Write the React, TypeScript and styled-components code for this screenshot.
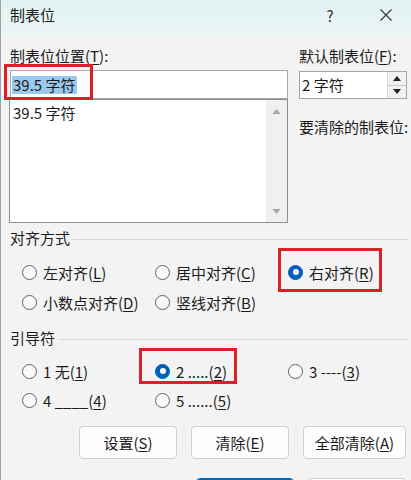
import React from "react";
import styled, { createGlobalStyle } from "styled-components";

const GlobalStyle = createGlobalStyle`
  html, body {
    margin: 0;
    padding: 0;
    background: #f3f3f3;
  }
  body {
    font-family: "Noto Sans CJK SC", "Noto Sans", sans-serif;
    font-size: 15px;
    color: #1b1b1b;
  }
`;

const Window = styled.div`
  width: 411px;
  height: 480px;
  overflow: hidden;
  box-sizing: border-box;
  background: #f3f3f3;
  border-left: 1px solid #a3a3a3;
`;

const TitleBar = styled.div`
  height: 36px;
  box-sizing: border-box;
  padding: 5px 0 0 9px;
  display: flex;
  align-items: flex-start;
  background: linear-gradient(#e2f2f2, #eaf5f4);
`;

const Title = styled.div`
  line-height: 20px;
  font-size: 15px;
`;

const TitleButtons = styled.div`
  margin-left: auto;
  margin-right: 3px;
  display: flex;
  gap: 12px;
`;

const TitleButton = styled.div`
  width: 44px;
  height: 20px;
  display: flex;
  align-items: center;
  justify-content: center;
  font-size: 15px;
  color: #333;
`;

const Body = styled.div`
  padding: 10px 3px 0 9px;
`;

const TopGrid = styled.div`
  display: grid;
  grid-template-columns: 278px 108px;
  column-gap: 11px;
`;

const Column = styled.div`
  display: flex;
  flex-direction: column;
`;

const Label = styled.div<{ $gap?: number }>`
  line-height: 20px;
  height: 20px;
  white-space: nowrap;
  margin-top: ${({ $gap }) => $gap ?? 0}px;
`;

const Key = styled.span`
  text-decoration: underline;
  text-underline-offset: 2px;
  text-decoration-thickness: 1px;
`;

const Callout = styled.span<{ $l: number; $t: number; $w: number; $h: number }>`
  position: absolute;
  left: ${({ $l }) => $l}px;
  top: ${({ $t }) => $t}px;
  width: ${({ $w }) => $w}px;
  height: ${({ $h }) => $h}px;
  box-sizing: border-box;
  border: 3px solid #dc2029;
  pointer-events: none;
`;

const TextBox = styled.div`
  position: relative;
  margin-top: 4px;
  height: 29px;
  box-sizing: border-box;
  border: 1px solid #a9a9a9;
  background: #fff;
  padding-left: 1px;
  display: flex;
  align-items: center;
`;

const Selection = styled.span`
  background: #99c9ef;
  line-height: 18px;
  padding: 0 1px;
`;

const ListBox = styled.div`
  margin-left: -1px;
  height: 124px;
  box-sizing: border-box;
  border: 1px solid #8d8d8d;
  background: #fff;
  display: flex;
`;

const ListItems = styled.div`
  flex: 1;
  padding: 3px 3px;
  line-height: 20px;
`;

const ScrollBar = styled.div`
  width: 21px;
  background: #f0f0f0;
  display: flex;
  flex-direction: column;
  justify-content: space-between;
  align-items: center;
  padding: 9px 0 8px;
`;

const SpinBox = styled.div`
  margin-top: 5px;
  height: 28px;
  box-sizing: border-box;
  border: 1px solid #a5a5a5;
  background: #fff;
  display: flex;
`;

const SpinText = styled.div`
  flex: 1;
  padding-left: 2px;
  line-height: 26px;
`;

const SpinButtons = styled.div`
  width: 18px;
  display: flex;
  flex-direction: column;
  border-left: 1px solid #d4d4d4;
`;

const SpinButton = styled.div<{ $down?: boolean }>`
  flex: 1;
  display: flex;
  align-items: center;
  justify-content: center;
  background: #f1f1f1;
  border-top: ${({ $down }) => ($down ? "1px solid #c9c9c9" : "none")};
`;

const Group = styled.div<{ $gap: number }>`
  margin-top: ${({ $gap }) => $gap}px;
`;

const GroupHeader = styled.div`
  display: flex;
  align-items: center;
  gap: 3px;
  line-height: 20px;
`;

const Rule = styled.div`
  flex: 1;
  height: 1px;
  margin-top: 2px;
  background: #d8d8d8;
`;

const RadioGrid = styled.div<{ $gap: number; $row: number }>`
  margin-top: ${({ $gap }) => $gap}px;
  padding-left: 12px;
  display: grid;
  grid-template-columns: repeat(3, 133px);
  grid-auto-rows: 24px;
  row-gap: ${({ $row }) => $row}px;
`;

const RadioItem = styled.label`
  position: relative;
  display: flex;
  align-items: center;
  gap: 6px;
  white-space: nowrap;
`;

const RadioDot = styled.span<{ $on?: boolean }>`
  position: relative;
  width: 15px;
  height: 15px;
  flex: none;
  box-sizing: border-box;
  border-radius: 50%;
  border: 1px solid ${({ $on }) => ($on ? "#005fb8" : "#616161")};
  background: ${({ $on }) => ($on ? "#005fb8" : "#f9f9f9")};
  &::after {
    content: "";
    display: ${({ $on }) => ($on ? "block" : "none")};
    position: absolute;
    left: 3.5px;
    top: 3.5px;
    width: 6px;
    height: 6px;
    border-radius: 50%;
    background: #fff;
  }
`;

const ButtonRow = styled.div<{ $gap: number }>`
  margin-top: ${({ $gap }) => $gap}px;
  padding-right: 2px;
  display: flex;
  justify-content: flex-end;
  gap: 14px;
`;

const Button = styled.div<{ $w?: number; $primary?: boolean }>`
  width: ${({ $w }) => $w ?? 98}px;
  height: 33px;
  box-sizing: border-box;
  border: 1px solid ${({ $primary }) => ($primary ? "#0067c0" : "#d0d0d0")};
  box-shadow: ${({ $primary }) => ($primary ? "inset 0 0 0 1px #0067c0" : "none")};
  border-radius: 4px;
  background: #fdfdfd;
  display: flex;
  align-items: center;
  justify-content: center;
  white-space: nowrap;
`;

type Mark = { l: number; t: number; w: number; h: number };
type Radio = { pre: string; key: string; on?: boolean; mark?: Mark };

const alignRadios: (Radio | null)[] = [
  { pre: "左对齐", key: "L" },
  { pre: "居中对齐", key: "C" },
  { pre: "右对齐", key: "R", on: true, mark: { l: -10, t: -12, w: 104, h: 44 } },
  { pre: "小数点对齐", key: "D" },
  { pre: "竖线对齐", key: "B" },
  null,
];

const leaderRadios: (Radio | null)[] = [
  { pre: "1 无", key: "1" },
  { pre: "2 .....", key: "2", on: true, mark: { l: -16, t: -11, w: 98, h: 36 } },
  { pre: "3 ----", key: "3" },
  { pre: "4 ____", key: "4" },
  { pre: "5 ......", key: "5" },
  null,
];

const UpArrow = ({ color = "#a6a6a6", w = 9 }: { color?: string; w?: number }) => (
  <svg width={w} height={Math.round(w * 0.6)} viewBox="0 0 10 6">
    <polygon points="0,6 5,0 10,6" fill={color} />
  </svg>
);

const DownArrow = ({ color = "#a6a6a6", w = 9 }: { color?: string; w?: number }) => (
  <svg width={w} height={Math.round(w * 0.6)} viewBox="0 0 10 6">
    <polygon points="0,0 10,0 5,6" fill={color} />
  </svg>
);

const RadioSet = ({ items }: { items: (Radio | null)[] }) => (
  <>
    {items.map((r, i) =>
      r ? (
        <RadioItem key={i}>
          <RadioDot $on={r.on} />
          <span>
            {r.pre}(<Key>{r.key}</Key>)
          </span>
          {r.mark && <Callout $l={r.mark.l} $t={r.mark.t} $w={r.mark.w} $h={r.mark.h} />}
        </RadioItem>
      ) : (
        <span key={i} />
      )
    )}
  </>
);

export default function App() {
  return (
    <>
      <GlobalStyle />
      <Window>
        <TitleBar>
          <Title>制表位</Title>
          <TitleButtons>
            <TitleButton>?</TitleButton>
            <TitleButton>
              <svg width="12" height="12" viewBox="0 0 12 12">
                <path d="M0.5 0.5 L11.5 11.5 M11.5 0.5 L0.5 11.5" stroke="#333" strokeWidth="1.1" />
              </svg>
            </TitleButton>
          </TitleButtons>
        </TitleBar>
        <Body>
          <TopGrid>
            <Column>
              <Label>
                制表位位置(<Key>T</Key>):
              </Label>
              <TextBox>
                <Selection>39.5 字符</Selection>
                <Callout $l={-7} $t={-7} $w={89} $h={36} />
              </TextBox>
              <ListBox>
                <ListItems>39.5 字符</ListItems>
                <ScrollBar>
                  <UpArrow />
                  <DownArrow />
                </ScrollBar>
              </ListBox>
            </Column>
            <Column>
              <Label>
                默认制表位(<Key>F</Key>):
              </Label>
              <SpinBox>
                <SpinText>2 字符</SpinText>
                <SpinButtons>
                  <SpinButton>
                    <UpArrow color="#222" w={8} />
                  </SpinButton>
                  <SpinButton $down>
                    <DownArrow color="#222" w={8} />
                  </SpinButton>
                </SpinButtons>
              </SpinBox>
              <Label $gap={18}>要清除的制表位:</Label>
            </Column>
          </TopGrid>

          <Group $gap={5}>
            <GroupHeader>
              <span>对齐方式</span>
              <Rule />
            </GroupHeader>
            <RadioGrid $gap={12} $row={6}>
              <RadioSet items={alignRadios} />
            </RadioGrid>
          </Group>

          <Group $gap={14}>
            <GroupHeader>
              <span>引导符</span>
              <Rule />
            </GroupHeader>
            <RadioGrid $gap={11} $row={5}>
              <RadioSet items={leaderRadios} />
            </RadioGrid>
          </Group>

          <ButtonRow $gap={14}>
            <Button>
              设置(<Key>S</Key>)
            </Button>
            <Button>
              清除(<Key>E</Key>)
            </Button>
            <Button $w={103}>
              全部清除(<Key>A</Key>)
            </Button>
          </ButtonRow>

          {/* OK / Cancel row, only its top edge is in view */}
          <ButtonRow $gap={19}>
            <Button $primary />
            <Button />
          </ButtonRow>
        </Body>
      </Window>
    </>
  );
}
